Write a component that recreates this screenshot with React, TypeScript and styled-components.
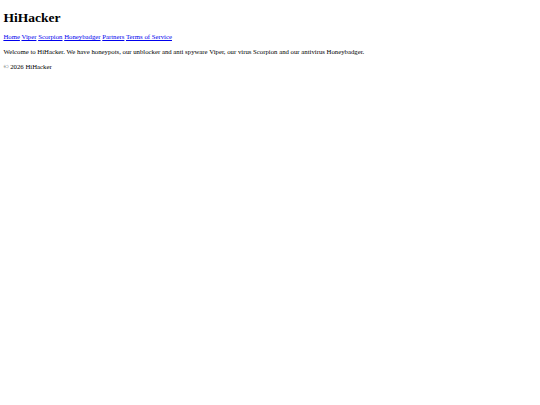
import React from 'react';
import styled, { createGlobalStyle } from 'styled-components';

// reference looks like a plain default-styled page rendered wide and scaled to ~0.42
const GlobalStyle = createGlobalStyle`
  body {
    margin: 3.4px;
    font-family: "Liberation Serif", "Times New Roman", serif;
    font-size: 6.75px;
    line-height: 7.5px;
    color: #000;
    background: #fff;
  }
`;

const Title = styled.h1`
  font-size: 13.5px;
  line-height: 16px;
  font-weight: bold;
  margin: 7px 0 7px;
`;

const Nav = styled.nav`
  margin: 0;
`;

const NavLink = styled.a`
  color: #0000ee;
  text-decoration: underline;
`;

const Text = styled.p`
  margin: 7.5px 0;
`;

const links = ['Home', 'Viper', 'Scorpion', 'Honeybadger', 'Partners', 'Terms of Service'];

export default function App() {
  return (
    <>
      <GlobalStyle />
      <header>
        <Title>HiHacker</Title>
        <Nav>
          {links.map((l, i) => (
            <React.Fragment key={l}>
              {i > 0 && ' '}
              <NavLink href="#">{l}</NavLink>
            </React.Fragment>
          ))}
        </Nav>
      </header>
      <main>
        <Text>
          Welcome to HiHacker. We have honeypots, our unblocker and anti spyware Viper, our virus
          Scorpion and our antivirus Honeybadger.
        </Text>
      </main>
      <footer>
        <Text>© 2026 HiHacker</Text>
      </footer>
    </>
  );
}
